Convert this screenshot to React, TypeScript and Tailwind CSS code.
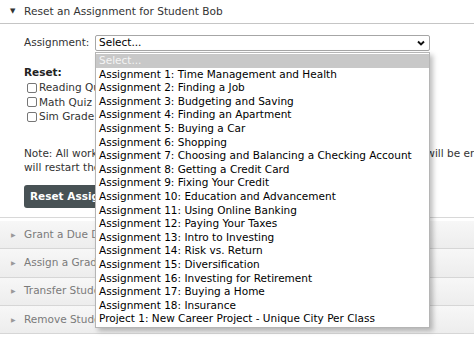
import React from 'react';

const assignments = [
  'Assignment 1: Time Management and Health',
  'Assignment 2: Finding a Job',
  'Assignment 3: Budgeting and Saving',
  'Assignment 4: Finding an Apartment',
  'Assignment 5: Buying a Car',
  'Assignment 6: Shopping',
  'Assignment 7: Choosing and Balancing a Checking Account',
  'Assignment 8: Getting a Credit Card',
  'Assignment 9: Fixing Your Credit',
  'Assignment 10: Education and Advancement',
  'Assignment 11: Using Online Banking',
  'Assignment 12: Paying Your Taxes',
  'Assignment 13: Intro to Investing',
  'Assignment 14: Risk vs. Return',
  'Assignment 15: Diversification',
  'Assignment 16: Investing for Retirement',
  'Assignment 17: Buying a Home',
  'Assignment 18: Insurance',
  'Project 1: New Career Project - Unique City Per Class',
];

const collapsed = [
  'Grant a Due Date Extension to Student Bob',
  'Assign a Grade to Student Bob',
  'Transfer Student Bob to Another Class',
  'Remove Student Bob from Class',
];

function Checkbox({ label }: { label: string }) {
  return (
    <label className="flex h-[14.5px] items-center">
      <span className="ml-[3px] mr-[2px] h-[10px] w-[10px] rounded-[2px] border border-[#767676] bg-white" />
      <span>{label}</span>
    </label>
  );
}

export default function App() {
  return (
    <div
      className="relative h-[338px] w-full overflow-hidden bg-white text-[10.5px] leading-[13.5px] text-[#333]"
      style={{ fontFamily: '"DejaVu Sans", Verdana, sans-serif' }}
    >
      <div className="w-[660px]">
        {/* expanded panel */}
        <div className="flex h-[24px] items-center border-b border-[#c5c5c5] pl-[10px]">
          <span className="w-[14px] text-[7px]">▼</span>
          <span className="text-[10.6px]">Reset an Assignment for Student Bob</span>
        </div>

        <div className="border-b border-[#d8d8d8] pb-[9px] pl-[24px] pt-[11px]">
          <div className="flex h-[16px] items-center">
            <span className="w-[71px]">Assignment:</span>
            <div className="flex h-[16px] w-[335px] items-center justify-between rounded-[2px] border border-[#a6a6a6] pl-[3px] pr-[4px] text-black">
              <span>Select...</span>
              <svg width="8" height="6" viewBox="0 0 8 6">
                <path d="M1 1.5 L4 4.5 L7 1.5" fill="none" stroke="#111" strokeWidth="1.9" />
              </svg>
            </div>
          </div>

          <div className="mt-[15px] font-bold text-[#222]">Reset:</div>
          <div className="mt-[1px] text-[#333]">
            <Checkbox label="Reading Quiz Grade" />
            <Checkbox label="Math Quiz Grade" />
            <Checkbox label="Sim Grade" />
          </div>

          <p className="mt-[22px] whitespace-nowrap leading-[14px]">
            Note: All work completed by a student in this assignment, including grades, will be
            erased and the student
            <br />
            will restart the assignment from the beginning.
          </p>

          <button className="mt-[11px] h-[23px] rounded-[3px] bg-[#485255] px-[6px] font-bold text-white">
            Reset Assignment
          </button>
        </div>

        {/* collapsed panels */}
        <div className="mt-[3px]">
          {collapsed.map((t) => (
            <div
              key={t}
              className="flex h-[28.3px] items-center border-b border-[#d6d6d6] bg-gradient-to-b from-[#f7f7f7] to-[#ededed] pl-[11px] text-[#7a7a7a]"
            >
              <span className="w-[13px] text-[6px] text-[#999]">▶</span>
              <span>{t}</span>
            </div>
          ))}
        </div>
      </div>

      {/* open select list */}
      <div className="absolute left-[95px] top-[52px] w-[335px] border border-[#b5b5b5] bg-white py-[1px] text-black leading-[13.6px] shadow-[3px_3px_5px_rgba(0,0,0,0.25)]">
        <div className="bg-[#c8c8c8] pl-[3px] text-[#f4f4f4]">Select...</div>
        {assignments.map((a) => (
          <div key={a} className="whitespace-nowrap pl-[3px]">
            {a}
          </div>
        ))}
      </div>
    </div>
  );
}
